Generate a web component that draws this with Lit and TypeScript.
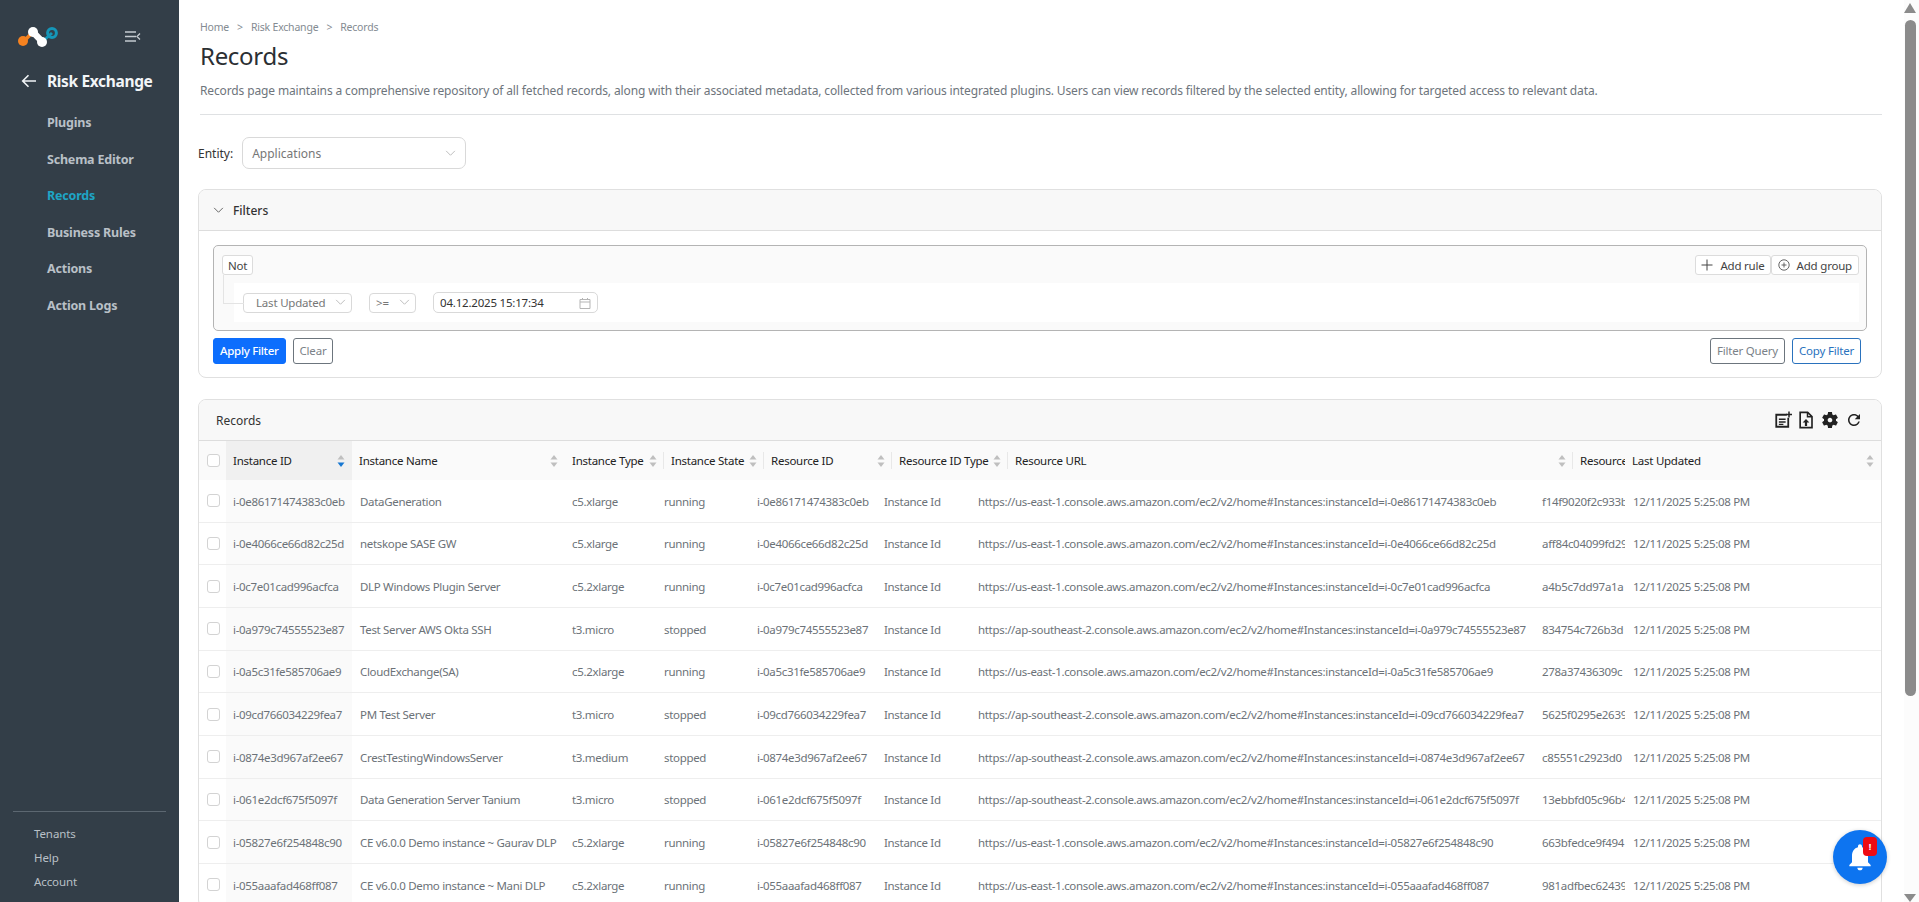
import { LitElement, html, css, svg } from "lit";
import { customElement } from "lit/decorators.js";

const EAST = "us-east-1";
const SE2 = "ap-southeast-2";

// id, name, type, state, region, resource hash
const records = [
  ["i-0e86171474383c0eb", "DataGeneration", "c5.xlarge", "running", EAST, "f14f9020f2c933b4a"],
  ["i-0e4066ce66d82c25d", "netskope SASE GW", "c5.xlarge", "running", EAST, "aff84c04099fd29a1"],
  ["i-0c7e01cad996acfca", "DLP Windows Plugin Server", "c5.2xlarge", "running", EAST, "a4b5c7dd97a1a"],
  ["i-0a979c74555523e87", "Test Server AWS Okta SSH", "t3.micro", "stopped", SE2, "834754c726b3d"],
  ["i-0a5c31fe585706ae9", "CloudExchange(SA)", "c5.2xlarge", "running", EAST, "278a37436309c"],
  ["i-09cd766034229fea7", "PM Test Server", "t3.micro", "stopped", SE2, "5625f0295e26395a"],
  ["i-0874e3d967af2ee67", "CrestTestingWindowsServer", "t3.medium", "stopped", SE2, "c85551c2923d0"],
  ["i-061e2dcf675f5097f", "Data Generation Server Tanium", "t3.micro", "stopped", SE2, "13ebbfd05c96b4c"],
  ["i-05827e6f254848c90", "CE v6.0.0 Demo instance ~ Gaurav DLP", "c5.2xlarge", "running", EAST, "663bfedce9f494"],
  ["i-055aaafad468ff087", "CE v6.0.0 Demo instance ~ Mani DLP", "c5.2xlarge", "running", EAST, "981adfbec62439a"],
];

const columns = [
  "Instance ID",
  "Instance Name",
  "Instance Type",
  "Instance State",
  "Resource ID",
  "Resource ID Type",
  "Resource URL",
  "Resource Name",
  "Last Updated",
];

const nav = ["Plugins", "Schema Editor", "Records", "Business Rules", "Actions", "Action Logs"];

const chevron = html`<svg class="chev" viewBox="0 0 12 8" width="11" height="7"><path d="M1 1l5 5 5-5" fill="none" stroke="currentColor" stroke-width="1"/></svg>`;

const sorter = (active = false) => html`<svg class="sort" viewBox="0 0 8 14" width="8" height="14">
  <path d="M4 1l3.5 4.5h-7z" fill="#bfbfbf"/>
  <path d="M4 13L.5 8.5h7z" fill=${active ? "#1677d2" : "#bfbfbf"}/>
</svg>`;

const logo = svg`<svg viewBox="0 0 44 24" width="44" height="24">
  <path d="M6 17L15 8" stroke="#f58220" stroke-width="3.5"/>
  <circle cx="5" cy="17" r="5" fill="#f58220"/>
  <path d="M24 18L34 9" stroke="#1596b8" stroke-width="3"/>
  <circle cx="34" cy="9" r="4.4" fill="none" stroke="#1596b8" stroke-width="3"/>
  <path d="M15 8l9.500 10" stroke="#fff" stroke-width="6.500"/>
  <circle cx="15" cy="8" r="5" fill="#fff"/>
  <circle cx="24" cy="18" r="5" fill="#fff"/>
</svg>`;

@customElement("app-root")
export class AppRoot extends LitElement {
  static styles = css`
    :host {
      display: flex;
      height: 100vh;
      overflow: hidden;
      font-family: "Noto Sans", "Open Sans", sans-serif;
      font-size: 11.5px;
      color: #333;
      background: #fff;
    }
    * {
      box-sizing: border-box;
    }
    .side {
      flex: 0 0 179px;
      display: flex;
      flex-direction: column;
      background: #333e48;
      color: #b9c0c7;
    }
    .brand {
      display: flex;
      align-items: center;
      height: 38px;
      margin-top: 17px;
      padding: 0 38px 0 18px;
      justify-content: space-between;
    }
    .back {
      display: flex;
      align-items: center;
      gap: 10px;
      height: 32px;
      margin-top: 10px;
      padding-left: 21px;
      color: #f2f5f7;
      font-size: 15.5px;
      font-weight: 700;
      letter-spacing: -0.35px;
    }
    .nav {
      display: flex;
      flex-direction: column;
      margin-top: 8px;
      padding-left: 47px;
    }
    .nav a {
      height: 36.6px;
      line-height: 36.6px;
      font-size: 12.5px;
      font-weight: 700;
      letter-spacing: -0.2px;
    }
    .nav a.on {
      color: #1ea5c6;
    }
    .foot {
      margin: auto 13px 8px;
      padding: 10px 0 0 21px;
      border-top: 1px solid #5c6771;
      display: flex;
      flex-direction: column;
    }
    .foot a {
      height: 24px;
      line-height: 24px;
      font-size: 11.5px;
      letter-spacing: -0.1px;
    }
    .main {
      flex: 1;
      min-width: 0;
      height: 100vh;
      overflow: hidden;
      padding: 18px 22px 0 19px;
    }
    .scroll {
      flex: 0 0 15px;
      display: flex;
      flex-direction: column;
      height: 100vh;
      padding-top: 3px;
      background: #fcfcfc;
    }
    .arrow-up {
      width: 0;
      height: 0;
      border: solid transparent;
      border-width: 0 6px 10px;
      border-bottom-color: #8b8b8b;
    }
    .thumb {
      flex: none;
      width: 11px;
      height: 676px;
      margin: 7px 0 0 1px;
      border-radius: 6px;
      background: #8b8b8b;
    }
    .arrow-down {
      width: 0;
      height: 0;
      margin-top: auto;
      border: solid transparent;
      border-width: 8px 6px 0;
      border-top-color: #8b8b8b;
    }
    .crumbs {
      display: flex;
      gap: 8px;
      margin-left: 2px;
      height: 18px;
      line-height: 18px;
      font-size: 10.5px;
      letter-spacing: -0.2px;
      color: #848b92;
    }
    h1 {
      margin: 0 0 0 2px;
      height: 40px;
      line-height: 40px;
      font-size: 24px;
      font-weight: 400;
      color: #2b2f33;
      letter-spacing: -0.3px;
    }
    .desc {
      margin: 6px 0 0 2px;
      padding-bottom: 15px;
      border-bottom: 1px solid #dfe1e3;
      line-height: 17px;
      font-size: 12px;
      letter-spacing: -0.13px;
      color: #6e757c;
      white-space: nowrap;
    }
    .entity {
      display: flex;
      align-items: center;
      gap: 9px;
      margin-top: 22px;
      font-size: 12px;
    }
    .select {
      display: flex;
      align-items: center;
      justify-content: space-between;
      background: #fff;
      border: 1px solid #d9d9d9;
      border-radius: 4px;
      color: #777;
    }
    .chev {
      color: #b5b5b5;
    }
    .entity .select {
      width: 224px;
      height: 32px;
      padding: 0 9px;
      border-radius: 7px;
      font-size: 12px;
    }
    .panel {
      margin-top: 21px;
      border: 1px solid #e0e0e0;
      border-radius: 8px;
      overflow: hidden;
    }
    .entity + .panel {
      margin-top: 20px;
    }
    .bar {
      display: flex;
      align-items: center;
      height: 41px;
      background: #f8f8f8;
      border-bottom: 1px solid #ddd;
      font-size: 12px;
      color: #333;
    }
    .bar.filters {
      gap: 9px;
      padding-left: 14px;
      font-weight: 500;
    }
    .bar.filters .chev {
      color: #555;
    }
    .bar.records {
      justify-content: space-between;
      padding: 0 18px 0 17px;
    }
    .tools {
      display: flex;
      align-items: center;
      gap: 5px;
    }
    .filter-body {
      padding: 14px 14px 13px;
    }
    .query {
      height: 86px;
      padding: 9px 7px 0 8px;
      border: 1px solid #b4b4b4;
      border-radius: 5px;
      background: #fafafa;
    }
    .query-top {
      display: flex;
      justify-content: space-between;
    }
    .pill {
      display: flex;
      align-items: center;
      height: 20px;
      padding: 0 5px;
      background: #fff;
      border: 1px solid #dcdcdc;
      border-radius: 3px;
      font-size: 11.5px;
      color: #444;
      letter-spacing: -0.2px;
    }
    .pair {
      display: flex;
    }
    .pair .pill {
      gap: 7px;
    }
    .pair .pill:last-child {
      padding-right: 6px;
      padding-left: 6px;
    }
    .rule {
      position: relative;
      display: flex;
      align-items: center;
      gap: 17px;
      height: 39px;
      margin: 8px 0 0 12px;
      padding-left: 9px;
      background: #fff;
      font-size: 11.5px;
      letter-spacing: -0.2px;
    }
    .rule::before {
      content: "";
      position: absolute;
      left: -11px;
      top: -8px;
      width: 20px;
      height: 28px;
      border: solid #e4e4e4;
      border-width: 0 0 1px 1px;
    }
    .rule .select {
      height: 20px;
      padding: 0 5px 0 12px;
    }
    .rule .field {
      width: 109px;
    }
    .rule .op {
      width: 47px;
      padding-left: 6px;
    }
    .rule .date {
      width: 165px;
      height: 21px;
      padding: 0 6px;
      border-radius: 5px;
      color: #333;
    }
    .actions {
      display: flex;
      gap: 7px;
      margin-top: 7px;
      padding-right: 6px;
    }
    .btn {
      height: 26px;
      line-height: 24px;
      padding: 0 6px;
      border: 1px solid #6c757d;
      border-radius: 3px;
      font-size: 11.5px;
      letter-spacing: -0.2px;
      color: #7b8288;
      white-space: nowrap;
    }
    .btn.primary {
      background: #0d6efd;
      border-color: #0d6efd;
      color: #fff;
      font-weight: 500;
      letter-spacing: -0.3px;
    }
    .btn.outline {
      border-color: #2a72bd;
      color: #2a72bd;
    }
    .spacer {
      flex: 1;
    }
    .head,
    .row {
      display: grid;
      align-items: center;
      white-space: nowrap;
    }
    .head {
      grid-template-columns: 27px 126px 213px 99px 100px 128px 116px 565px 52px 256px;
      height: 39px;
      background: #fafafa;
      font-size: 11.5px;
      letter-spacing: -0.25px;
      color: #222;
    }
    .head > div {
      display: flex;
      align-items: center;
      justify-content: space-between;
      height: 100%;
      min-width: 0;
      overflow: hidden;
      padding: 0 7px 0 7px;
    }
    .head > div.ruled {
      position: relative;
    }
    .head > div.ruled::after {
      content: "";
      position: absolute;
      right: 0;
      top: 11px;
      height: 17px;
      border-right: 1px solid #e8e8e8;
    }
    .head .sorted {
      background: #f0f0f0;
    }
    .row {
      grid-template-columns: 27px 126px 212px 92px 93px 127px 94px 564px 91px 256px;
      height: 42.67px;
      border-bottom: 1px solid #eee;
      font-size: 11.5px;
      letter-spacing: -0.32px;
      color: #6c7278;
    }
    .row > div {
      display: flex;
      align-items: center;
      height: 100%;
      min-width: 0;
      overflow: hidden;
      padding: 1px 0 0 8px;
    }
    .row > .idcell {
      background: #fafafa;
      padding-left: 7px;
    }
    .head > .checkcell,
    .row > .checkcell {
      padding: 0 0 0 8px;
      justify-content: flex-start;
      overflow: visible;
    }
    .check {
      flex: none;
      width: 13px;
      height: 13px;
      background: #fff;
      border: 1px solid #d3d3d3;
      border-radius: 3px;
    }
    .sort {
      flex: none;
    }
    .bell {
      position: fixed;
      right: 32px;
      bottom: 18px;
      width: 54px;
      height: 54px;
      display: flex;
      align-items: center;
      justify-content: center;
      border-radius: 50%;
      background: #0d74f0;
      box-shadow: 0 1px 4px rgba(0, 0, 0, 0.2);
    }
    .badge {
      position: absolute;
      left: 30px;
      top: 7px;
      width: 14px;
      height: 19px;
      border-radius: 4px;
      background: #ee0b12;
      color: #fff;
      font-size: 9px;
      font-weight: 700;
      line-height: 19px;
      text-align: center;
    }
  `;

  render() {
    return html`
      <aside class="side">
        <div class="brand">
          ${logo}
          <svg viewBox="0 0 16 11" width="16" height="11">
            <path d="M0 1h11M0 5.500h11M0 10h11M15 2.500L12 5.500l3 3" fill="none" stroke="#c4cad0" stroke-width="1.300"/>
          </svg>
        </div>
        <div class="back">
          <svg viewBox="0 0 16 14" width="16" height="14">
            <path d="M15 7H2M7.500 1.200L1.700 7l5.800 5.800" fill="none" stroke="#f2f5f7" stroke-width="1.600"/>
          </svg>
          Risk Exchange
        </div>
        <nav class="nav">
          ${nav.map((n) => html`<a class=${n === "Records" ? "on" : ""}>${n}</a>`)}
        </nav>
        <div class="foot"><a>Tenants</a><a>Help</a><a>Account</a></div>
      </aside>
      <main class="main">
        <div class="crumbs">
          <span>Home</span><span>&gt;</span><span>Risk Exchange</span><span>&gt;</span><span>Records</span>
        </div>
        <h1>Records</h1>
        <div class="desc">
          Records page maintains a comprehensive repository of all fetched records, along with their associated
          metadata, collected from various integrated plugins. Users can view records filtered by the selected entity,
          allowing for targeted access to relevant data.
        </div>
        <div class="entity">
          <span>Entity:</span>
          <div class="select"><span>Applications</span>${chevron}</div>
        </div>
        ${this.renderFilters()} ${this.renderRecords()}
      </main>
      <div class="scroll">
        <div class="arrow-up"></div>
        <div class="thumb"></div>
        <div class="arrow-down"></div>
      </div>
      <div class="bell">
        <svg viewBox="0 0 24 24" width="32" height="32">
          <path fill="#fff" d="M12 22c1.100 0 2-.9 2-2h-4c0 1.100.9 2 2 2zm6-6v-5c0-3.070-1.630-5.640-4.500-6.320V4c0-.83-.67-1.500-1.500-1.500s-1.500.67-1.500 1.500v.68C7.640 5.360 6 7.920 6 11v5l-2 2v1h16v-1l-2-2z"/>
        </svg>
        <span class="badge">!</span>
      </div>
    `;
  }

  renderFilters() {
    return html`
      <section class="panel">
        <div class="bar filters">${chevron}<span>Filters</span></div>
        <div class="filter-body">
          <div class="query">
            <div class="query-top">
              <div class="pill">Not</div>
              <div class="pair">
                <div class="pill">
                  <svg viewBox="0 0 12 12" width="12" height="12"><path d="M6 .5v11M.5 6h11" stroke="#444" fill="none"/></svg>
                  Add rule
                </div>
                <div class="pill">
                  <svg viewBox="0 0 12 12" width="12" height="12">
                    <circle cx="6" cy="6" r="5.200" fill="none" stroke="#555" stroke-width=".9"/>
                    <path d="M6 3.500v5M3.500 6h5" stroke="#555" stroke-width=".9"/>
                  </svg>
                  Add group
                </div>
              </div>
            </div>
            <div class="rule">
              <div class="select field"><span>Last Updated</span>${chevron}</div>
              <div class="select op"><span>&gt;=</span>${chevron}</div>
              <div class="select date">
                <span>04.12.2025 15:17:34</span>
                <svg viewBox="0 0 12 12" width="12" height="12">
                  <path d="M1 2.500h10v9H1zM1 5h10M3.500 1v2M8.500 1v2" fill="none" stroke="#b5b5b5"/>
                </svg>
              </div>
            </div>
          </div>
          <div class="actions">
            <div class="btn primary">Apply Filter</div>
            <div class="btn">Clear</div>
            <div class="spacer"></div>
            <div class="btn">Filter Query</div>
            <div class="btn outline">Copy Filter</div>
          </div>
        </div>
      </section>
    `;
  }

  renderRecords() {
    return html`
      <section class="panel">
        <div class="bar records">
          <span>Records</span>
          <div class="tools">
            <svg viewBox="0 0 24 24" width="18" height="18">
              <path fill="none" stroke="#222" stroke-width="2.400" d="M17 5H3v16h16V9"/>
              <path fill="#222" d="M6.500 10h9v2h-9zM6.500 13.500h9v2h-9zM6.500 17h6v1.600h-6zM19 .5h2v3h3v2h-3v3h-2v-3h-3v-2h3z"/>
            </svg>
            <svg viewBox="0 0 24 24" width="18" height="18">
              <path fill="none" stroke="#222" stroke-width="2.200" d="M4.200 1.800h10L20 7.600v14.600H4.200z"/>
              <path fill="#222" d="M13 1.800h2v5h5v2h-7zM12 10.500l4.500 4.800h-3V20h-3v-4.700h-3z"/>
            </svg>
            <svg viewBox="0 0 24 24" width="20" height="20">
              <path fill="#222" d="M19.140 12.940c.04-.3.06-.61.06-.94 0-.32-.02-.64-.07-.94l2.030-1.580c.18-.14.23-.41.12-.61l-1.920-3.320c-.12-.22-.37-.29-.59-.22l-2.390.96c-.5-.38-1.030-.7-1.620-.94l-.36-2.540c-.04-.24-.24-.41-.48-.41h-3.840c-.24 0-.43.17-.47.41l-.36 2.540c-.59.24-1.130.57-1.620.94l-2.390-.96c-.22-.08-.47 0-.59.22L2.740 8.870c-.12.21-.08.47.12.61l2.030 1.580c-.05.3-.09.63-.09.94s.02.64.07.94l-2.030 1.580c-.18.14-.23.41-.12.61l1.920 3.320c.12.22.37.29.59.22l2.390-.96c.5.38 1.030.7 1.620.94l.36 2.540c.05.24.24.41.48.41h3.840c.24 0 .44-.17.47-.41l.36-2.540c.59-.24 1.130-.56 1.620-.94l2.390.96c.22.08.47 0 .59-.22l1.920-3.320c.12-.22.07-.47-.12-.61l-2.010-1.580zM12 14.800c-1.540 0-2.800-1.260-2.800-2.800s1.260-2.800 2.800-2.800 2.800 1.260 2.800 2.800-1.260 2.800-2.800 2.800z"/>
            </svg>
            <svg viewBox="0 0 24 24" width="18" height="18">
              <path fill="#222" d="M17.650 6.350C16.200 4.900 14.210 4 12 4c-4.420 0-7.990 3.580-7.990 8s3.570 8 7.990 8c3.730 0 6.840-2.550 7.730-6h-2.080c-.82 2.330-3.040 4-5.650 4-3.310 0-6-2.690-6-6s2.690-6 6-6c1.660 0 3.140.69 4.220 1.780L13 11h7V4l-2.350 2.350z"/>
            </svg>
          </div>
        </div>
        <div class="head">
          <div class="checkcell"><span class="check"></span></div>
          ${columns.map(
            (c, i) => html`<div
              class="${i === 0 ? "sorted" : ""} ${i >= 2 && i <= 6 ? "ruled" : ""}"
            >
              <span>${c}</span>${i === 7 ? "" : sorter(i === 0)}
            </div>`
          )}
        </div>
        ${records.map(
          ([id, name, type, state, region, hash]) => html`
            <div class="row">
              <div class="checkcell"><span class="check"></span></div>
              <div class="idcell">${id}</div>
              <div>${name}</div>
              <div>${type}</div>
              <div>${state}</div>
              <div>${id}</div>
              <div>Instance Id</div>
              <div>https://${region}.console.aws.amazon.com/ec2/v2/home#Instances:instanceId=${id}</div>
              <div>${hash}</div>
              <div>12/11/2025 5:25:08 PM</div>
            </div>
          `
        )}
      </section>
    `;
  }
}
